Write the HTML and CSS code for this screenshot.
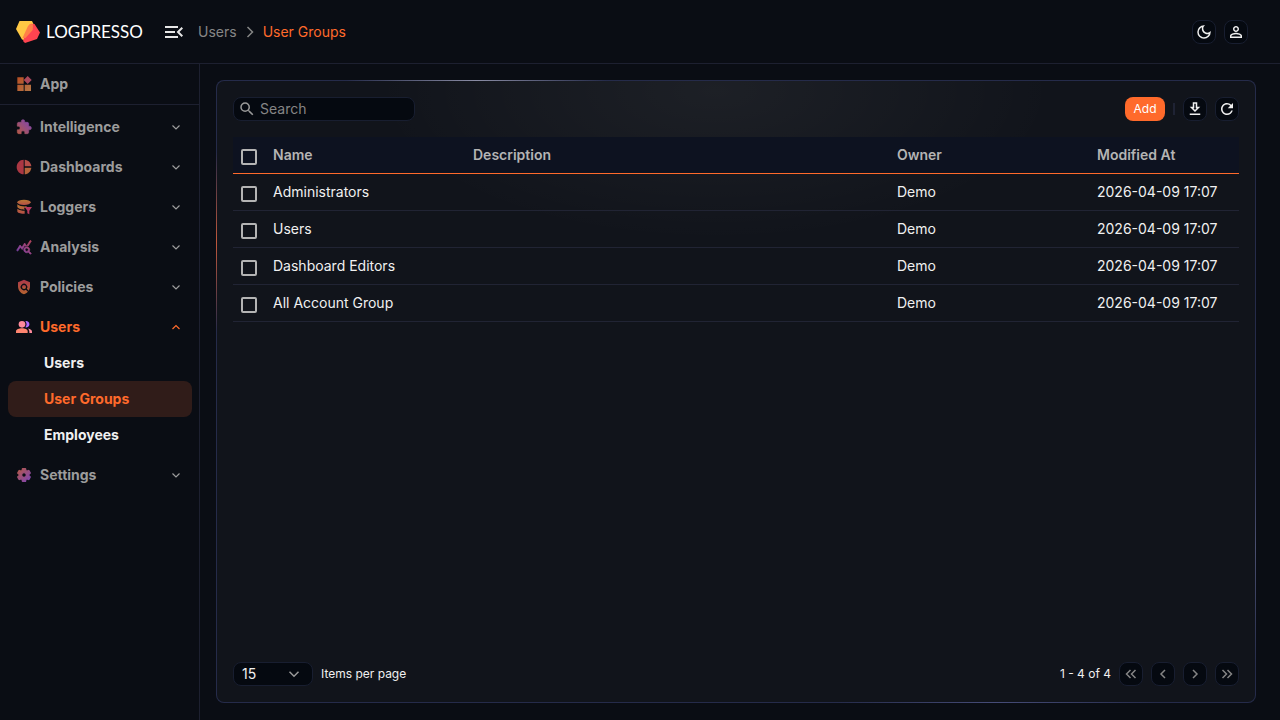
FILE: index.html
```
<!DOCTYPE html>
<html lang="en">
<head>
    <meta charset="UTF-8">
    <meta name="viewport" content="width=device-width, initial-scale=1.0">
    <title>User Groups - Logpresso</title>
    <link rel="stylesheet" href="styles.css">
</head>
<body>
    <!-- shared gradients and glyphs -->
    <svg class="defs" aria-hidden="true">
        <defs>
            <linearGradient id="g-orange" x1="0" y1="0" x2="1" y2="1">
                <stop offset="0" stop-color="#ff6a2b"/><stop offset="1" stop-color="#ffa45c"/>
            </linearGradient>
            <linearGradient id="g-purple" x1="0" y1="1" x2="1" y2="0">
                <stop offset="0" stop-color="#ff7a5c"/><stop offset="1" stop-color="#a95cff"/>
            </linearGradient>
            <linearGradient id="g-red" x1="0" y1="0" x2="0" y2="1">
                <stop offset="0" stop-color="#f04a62"/><stop offset="1" stop-color="#ff8a3d"/>
            </linearGradient>
            <linearGradient id="g-amber" x1="0" y1="0" x2="0" y2="1">
                <stop offset="0" stop-color="#ffa640"/><stop offset="1" stop-color="#ff6a5c"/>
            </linearGradient>
            <linearGradient id="g-stats" x1="1" y1="0" x2="0" y2="1">
                <stop offset="0" stop-color="#ff5c77"/><stop offset="1" stop-color="#a95cff"/>
            </linearGradient>
            <linearGradient id="g-gear" x1="0" y1="0" x2="1" y2="1">
                <stop offset="0" stop-color="#ff7a5c"/><stop offset="1" stop-color="#b05cff"/>
            </linearGradient>
        </defs>
        <symbol id="chevron-down" viewBox="0 0 16 16"><path d="M4.5 6.5L8 10l3.500-3.500" fill="none" stroke="currentColor" stroke-width="1.2"/></symbol>
        <symbol id="chevron-up" viewBox="0 0 16 16"><path d="M4.5 10L8 6.500l3.500 3.500" fill="none" stroke="currentColor" stroke-width="1.2"/></symbol>
    </svg>

    <header class="header">
        <a class="logo" href="#">
            <svg width="24" height="24" viewBox="0 0 24 24" aria-hidden="true">
                <path d="M3.500 1H16l1.500 3L8 20 6 19.500 0 9z" fill="#ffc844"/>
                <path d="M15 3.800l3.500.2 5.500 8.500-3 6.500L9 23l-2-2 1.500-4 5-12z" fill="#ff4450"/>
                <path d="M14 4l3 .2-.3 5.800L9.500 18 6.500 18 12 6z" fill="#ff8147"/>
            </svg>
            <span>LOGPRESSO</span>
        </a>
        <button class="menu-toggle" aria-label="Toggle menu">
            <svg width="24" height="24" viewBox="0 0 24 24"><path d="M3 18h13v-2H3v2zm0-5h10v-2H3v2zm0-7v2h13V6H3zm18 9.590L17.420 12 21 8.410 19.590 7l-5 5 5 5L21 15.590z"/></svg>
        </button>
        <nav class="breadcrumb" aria-label="Breadcrumb">
            <a href="#">Users</a>
            <svg width="12" height="12" viewBox="0 0 12 12" aria-hidden="true"><path d="M3.500 1l5 5-5 5" fill="none" stroke="currentColor" stroke-width="1.500"/></svg>
            <a class="current" href="#">User Groups</a>
        </nav>
        <div class="header-actions">
            <button class="icon-btn" aria-label="Dark mode">
                <svg viewBox="0 0 24 24"><path d="M9.370 5.510c-.18.64-.27 1.310-.27 1.990 0 4.080 3.320 7.400 7.400 7.400.68 0 1.350-.09 1.990-.27C17.450 17.190 14.930 19 12 19c-3.860 0-7-3.140-7-7 0-2.930 1.810-5.450 4.370-6.490zM12 3a9 9 0 1 0 9 9c0-.46-.04-.92-.1-1.360a5.389 5.389 0 0 1-4.400 2.260 5.403 5.403 0 0 1-3.140-9.800c-.44-.06-.9-.1-1.360-.1z"/></svg>
            </button>
            <button class="icon-btn" aria-label="Account">
                <svg viewBox="0 0 24 24"><path d="M12 5.900c1.160 0 2.100.94 2.100 2.100s-.94 2.100-2.100 2.100S9.900 9.160 9.900 8s.94-2.100 2.100-2.100m0 9c2.970 0 6.100 1.460 6.100 2.100v1.100H5.900V17c0-.64 3.130-2.100 6.100-2.100M12 4C9.790 4 8 5.790 8 8s1.790 4 4 4 4-1.790 4-4-1.790-4-4-4zm0 9c-2.670 0-8 1.340-8 4v3h16v-3c0-2.660-5.330-4-8-4z"/></svg>
            </button>
        </div>
    </header>

    <div class="layout">
        <nav class="sidebar" aria-label="Main">
            <a class="menu-item menu-app" href="#">
                <svg class="menu-icon" viewBox="0 0 24 24" fill="url(#g-orange)"><path d="M2 2h9.500v9.500H2zM2 13h9.500v9.500H2zM13 13h9.500v9.500H13z"/><path d="M17.500 0l6 6-6 6-6-6z" fill="#f0627a"/></svg>
                <span>App</span>
            </a>
            <div class="menu">
                <button class="menu-item">
                    <svg class="menu-icon" viewBox="0 0 24 24" fill="url(#g-purple)"><path stroke="url(#g-purple)" d="M20.500 11H19V7c0-1.100-.9-2-2-2h-4V3.500a2.500 2.500 0 0 0-5 0V5H4c-1.100 0-1.990.9-1.990 2v3.800H3.500c1.490 0 2.700 1.210 2.700 2.700s-1.210 2.700-2.700 2.700H2V20c0 1.100.9 2 2 2h3.800v-1.500c0-1.490 1.210-2.700 2.700-2.700 1.490 0 2.700 1.210 2.700 2.700V22H17c1.100 0 2-.9 2-2v-4h1.500a2.500 2.500 0 0 0 0-5z"/></svg>
                    <span>Intelligence</span>
                    <svg class="chevron"><use href="#chevron-down"/></svg>
                </button>
                <button class="menu-item">
                    <svg class="menu-icon" viewBox="0 0 24 24"><path d="M11.500 1v22C5.500 23 1 18 1 12S5.500 1 11.500 1z" fill="#f04a58"/><path d="M13 1c5.500.5 9.500 4.500 10 10H13z" fill="#ff6a60"/><path d="M13 13h10c-.5 5.500-4.800 9.500-10 10z" fill="#ff8a4c"/></svg>
                    <span>Dashboards</span>
                    <svg class="chevron"><use href="#chevron-down"/></svg>
                </button>
                <button class="menu-item">
                    <svg class="menu-icon" viewBox="0 0 24 24" fill="url(#g-amber)"><ellipse cx="12" cy="5" rx="10" ry="4"/><path d="M2 8c3 3 10 3.500 14 3v2H12l1 3C8 16 3 14.500 2 12zM2 14.500c3 2 7 3 11 3V22C8 22 3 21 2 19z"/><path d="M13 12h11l-4 5.500V23l-3-1.500v-4z" fill="#ff4d80"/></svg>
                    <span>Loggers</span>
                    <svg class="chevron"><use href="#chevron-down"/></svg>
                </button>
                <button class="menu-item">
                    <svg class="menu-icon" viewBox="0 0 24 24" fill="url(#g-stats)"><path d="M19.880 18.470c.44-.7.7-1.510.7-2.390 0-2.490-2.010-4.500-4.500-4.500s-4.500 2.010-4.500 4.500 2.010 4.500 4.490 4.500c.88 0 1.700-.26 2.390-.7L21.580 23 23 21.580l-3.120-3.110zm-3.800.11a2.500 2.500 0 0 1 0-5 2.500 2.500 0 0 1 0 5zm-.36-8.500c-.74.02-1.450.18-2.100.45l-.55-.83-3.800 6.180-3.010-3.520-3.630 5.810L1 17l5-8 3 3.500L13 6l2.720 4.080zm2.590.5c-.64-.28-1.330-.45-2.050-.49L21.380 2 23 3.180l-4.690 7.400z" stroke="url(#g-stats)"/></svg>
                    <span>Analysis</span>
                    <svg class="chevron"><use href="#chevron-down"/></svg>
                </button>
                <button class="menu-item">
                    <svg class="menu-icon" viewBox="0 0 24 24" fill="url(#g-red)"><path d="M21 5l-9-4-9 4v6c0 5.550 3.840 10.740 9 12 2.300-.56 4.330-1.900 5.880-3.710l-3.120-3.120a4.994 4.994 0 0 1-6.290-.64 5.003 5.003 0 0 1 0-7.070 5.003 5.003 0 0 1 7.070 0 5.006 5.006 0 0 1 .64 6.290l2.900 2.900C20.290 15.690 21 13.380 21 11V5z"/><circle cx="12" cy="12" r="3"/></svg>
                    <span>Policies</span>
                    <svg class="chevron"><use href="#chevron-down"/></svg>
                </button>
                <button class="menu-item open" aria-expanded="true">
                    <svg class="menu-icon" viewBox="0 0 24 24"><path d="M14 3.300a4.800 4.800 0 1 1 0 9.200c2.500-3 2.500-6.200 0-9.200z" fill="#b06aff"/><circle cx="9" cy="8" r="5" fill="#ff8a9c"/><path d="M0 21v-2.500C0 15.500 4.500 14 9 14s8.500 1.500 8.500 4.500V21z" fill="#ff8570"/><path d="M18 14.200c3.800.8 6 2.300 6 4.800v2h-4v-2c0-2-.8-3.500-2-4.800z" fill="#ff8a9c"/></svg>
                    <span>Users</span>
                    <svg class="chevron"><use href="#chevron-up"/></svg>
                </button>
                <div class="submenu">
                    <a href="#">Users</a>
                    <a class="active" href="#">User Groups</a>
                    <a href="#">Employees</a>
                </div>
                <button class="menu-item">
                    <svg class="menu-icon" viewBox="0 0 24 24" fill="url(#g-gear)"><path stroke="url(#g-gear)" stroke-width="2" d="M19.140 12.940c.04-.3.06-.61.06-.94 0-.32-.02-.64-.07-.94l2.030-1.580c.18-.14.23-.41.12-.61l-1.920-3.320c-.12-.22-.37-.29-.59-.22l-2.390.96c-.5-.38-1.030-.7-1.620-.94l-.36-2.540c-.04-.24-.24-.41-.48-.41h-3.840c-.24 0-.43.17-.47.41l-.36 2.540c-.59.24-1.130.57-1.620.94l-2.390-.96c-.22-.08-.47 0-.59.22L2.740 8.870c-.12.21-.08.47.12.61l2.030 1.580c-.05.3-.09.63-.09.94s.02.64.07.94l-2.030 1.580c-.18.14-.23.41-.12.61l1.920 3.320c.12.22.37.29.59.22l2.390-.96c.5.38 1.030.7 1.620.94l.36 2.540c.05.24.24.41.48.41h3.840c.24 0 .44-.17.47-.41l.36-2.540c.59-.24 1.130-.56 1.620-.94l2.390.96c.22.08.47 0 .59-.22l1.920-3.320c.12-.22.07-.47-.12-.61l-2.010-1.580zM12 15.600c-1.980 0-3.600-1.620-3.600-3.600s1.620-3.600 3.600-3.600 3.600 1.620 3.600 3.600-1.620 3.600-3.600 3.600z"/></svg>
                    <span>Settings</span>
                    <svg class="chevron"><use href="#chevron-down"/></svg>
                </button>
            </div>
        </nav>

        <main class="main">
            <section class="card">
                <div class="toolbar">
                    <label class="search">
                        <svg viewBox="0 0 24 24" aria-hidden="true"><path d="M15.500 14h-.79l-.28-.27A6.471 6.471 0 0 0 16 9.500 6.500 6.500 0 1 0 9.500 16c1.610 0 3.090-.59 4.230-1.570l.27.28v.79l5 4.990L20.490 19l-4.990-5zm-6 0C7.010 14 5 11.990 5 9.500S7.010 5 9.500 5 14 7.010 14 9.500 11.990 14 9.500 14z"/></svg>
                        <input type="text" placeholder="Search" aria-label="Search">
                    </label>
                    <div class="toolbar-actions">
                        <button class="btn-add">Add</button>
                        <span class="divider"></span>
                        <button class="icon-btn" aria-label="Download">
                            <svg viewBox="0 0 24 24"><path d="M19 9h-4V3H9v6H5l7 7 7-7zm-8 2V5h2v6h1.170L12 13.170 9.830 11H11zm-6 7h14v2H5z"/></svg>
                        </button>
                        <button class="icon-btn" aria-label="Refresh">
                            <svg viewBox="0 0 24 24"><path d="M17.650 6.350A7.958 7.958 0 0 0 12 4c-4.420 0-7.990 3.580-7.990 8s3.570 8 7.990 8c3.730 0 6.840-2.550 7.730-6h-2.080A5.990 5.990 0 0 1 12 18c-3.310 0-6-2.690-6-6s2.690-6 6-6c1.660 0 3.140.69 4.220 1.780L13 11h7V4l-2.350 2.350z"/></svg>
                        </button>
                    </div>
                </div>

                <table class="grid">
                    <colgroup>
                        <col class="col-check">
                        <col class="col-name">
                        <col>
                        <col class="col-owner">
                        <col class="col-date">
                    </colgroup>
                    <thead>
                        <tr>
                            <th><input type="checkbox" aria-label="Select all"></th>
                            <th>Name</th>
                            <th>Description</th>
                            <th>Owner</th>
                            <th>Modified At</th>
                        </tr>
                    </thead>
                    <tbody>
                        <tr>
                            <td><input type="checkbox" aria-label="Select Administrators"></td>
                            <td>Administrators</td>
                            <td></td>
                            <td>Demo</td>
                            <td>2026-04-09 17:07</td>
                        </tr>
                        <tr>
                            <td><input type="checkbox" aria-label="Select Users"></td>
                            <td>Users</td>
                            <td></td>
                            <td>Demo</td>
                            <td>2026-04-09 17:07</td>
                        </tr>
                        <tr>
                            <td><input type="checkbox" aria-label="Select Dashboard Editors"></td>
                            <td>Dashboard Editors</td>
                            <td></td>
                            <td>Demo</td>
                            <td>2026-04-09 17:07</td>
                        </tr>
                        <tr>
                            <td><input type="checkbox" aria-label="Select All Account Group"></td>
                            <td>All Account Group</td>
                            <td></td>
                            <td>Demo</td>
                            <td>2026-04-09 17:07</td>
                        </tr>
                    </tbody>
                </table>

                <div class="pager">
                    <div class="select">
                        <select id="page-size">
                            <option>15</option>
                            <option>50</option>
                            <option>100</option>
                        </select>
                        <svg viewBox="0 0 16 16" aria-hidden="true"><path d="M4 6l4 4 4-4" fill="none" stroke="currentColor" stroke-width="1.300"/></svg>
                    </div>
                    <label for="page-size">Items per page</label>
                    <span class="range">1 - 4 of 4</span>
                    <button class="icon-btn page-btn" aria-label="First page">
                        <svg viewBox="0 0 18 18"><path d="M8.500 5l-4 4 4 4M13.500 5l-4 4 4 4"/></svg>
                    </button>
                    <button class="icon-btn page-btn" aria-label="Previous page">
                        <svg viewBox="0 0 18 18"><path d="M11 5L7 9l4 4"/></svg>
                    </button>
                    <button class="icon-btn page-btn" aria-label="Next page">
                        <svg viewBox="0 0 18 18"><path d="M7 5l4 4-4 4"/></svg>
                    </button>
                    <button class="icon-btn page-btn" aria-label="Last page">
                        <svg viewBox="0 0 18 18"><path d="M4.500 5l4 4-4 4M9.500 5l4 4-4 4"/></svg>
                    </button>
                </div>
            </section>
        </main>
    </div>
</body>
</html>
```
FILE: styles.css
```
*{
    box-sizing: border-box;
}

body{
    margin: 0;
    min-height: 100vh;
    display: flex;
    flex-direction: column;
    background-color: #0a0d14;
    color: #f0f0f0;
    font-family: Inter, "Liberation Sans", sans-serif;
    font-size: 14px;
    line-height: 20px;
}

a{
    color: inherit;
    text-decoration: none;
}

button, input, select{
    font: inherit;
    color: inherit;
}

button{
    padding: 0;
    border: 0;
    background: none;
    cursor: pointer;
}

svg{
    display: block;
    flex: none;
}

.defs{
    position: absolute;
    width: 0;
    height: 0;
}

/* header */
.header{
    display: flex;
    align-items: center;
    height: 64px;
    padding: 0 32px 0 16px;
    border-bottom: 1px solid #1d2030;
}

.logo{
    display: flex;
    align-items: center;
    gap: 6px;
    width: 146px;
    color: #fff;
    font-family: Lato, sans-serif;
    font-size: 17px;
}

.menu-toggle svg{
    fill: #e6e6e6;
}

.breadcrumb{
    display: flex;
    align-items: center;
    gap: 7px;
    margin-left: 12px;
    color: #868686;
}

.breadcrumb .current{
    color: #ff6a2b;
}

.header-actions{
    display: flex;
    gap: 8px;
    margin-left: auto;
}

.icon-btn{
    display: flex;
    align-items: center;
    justify-content: center;
    width: 24px;
    height: 24px;
    border: 1px solid #181e30;
    border-radius: 8px;
    background-color: #050910;
}

.icon-btn svg{
    width: 18px;
    height: 18px;
    fill: #f0f0f0;
}

/* sidebar */
.layout{
    display: flex;
    flex: 1;
}

.sidebar{
    flex: none;
    width: 200px;
    border-right: 1px solid #1d2030;
}

.menu{
    display: flex;
    flex-direction: column;
    gap: 4px;
    padding: 4px 0;
}

.menu-item{
    display: flex;
    align-items: center;
    gap: 8px;
    width: 100%;
    height: 36px;
    padding: 0 15px 0 16px;
    color: #9c9c9c;
    font-weight: 700;
    text-align: left;
}

.menu-app{
    height: 41px;
    border-bottom: 1px solid #1d2030;
}

.menu-icon{
    width: 16px;
    height: 16px;
    opacity: 0.7;
}

.chevron{
    width: 16px;
    height: 16px;
    margin-left: auto;
}

.menu-item.open{
    color: #ff6a2b;
}

.menu-item.open .menu-icon{
    opacity: 1;
}

.submenu{
    margin-top: -4px;
    padding: 0 7px 0 8px;
}

.submenu a{
    display: block;
    padding: 8px 36px;
    border-radius: 8px;
    font-weight: 700;
}

.submenu .active{
    background-color: #301c19;
    color: #ff6a2b;
}

/* content */
.main{
    display: flex;
    flex: 1;
    min-width: 0;
    padding: 16px 24px 17px 16px;
}

/* first layers are the card surface, the rest shine through the 1px border */
.card{
    display: flex;
    flex-direction: column;
    flex: 1;
    min-width: 0;
    padding: 16px;
    border: 1px solid transparent;
    border-radius: 8px;
    background:
        radial-gradient(ellipse 340px 150px at 48% 10px, rgba(255, 255, 240, 0.05), transparent) padding-box,
        linear-gradient(#11141b, #11141b) padding-box,
        radial-gradient(circle 90px at 0 26%, #c0583c, transparent) border-box,
        radial-gradient(circle 130px at 25% 0, #8a8ca4, transparent) border-box,
        radial-gradient(circle 160px at 75% 100%, #464c78, transparent) border-box,
        radial-gradient(circle 120px at 100% 75%, #4a4f70, transparent) border-box,
        linear-gradient(#252b4a, #252b4a) border-box;
}

.toolbar{
    display: flex;
    justify-content: space-between;
    margin-bottom: 16px;
}

.search{
    display: flex;
    align-items: center;
    gap: 4px;
    width: 182px;
    height: 24px;
    padding: 0 4px;
    border: 1px solid #181e30;
    border-radius: 8px;
    background-color: #050910;
}

.search svg{
    width: 18px;
    height: 18px;
    fill: #999;
}

.search input{
    width: 100%;
    min-width: 0;
    padding: 0;
    border: 0;
    outline: none;
    background: none;
}

.search input::placeholder{
    color: #858585;
    opacity: 1;
}

.toolbar-actions{
    display: flex;
    align-items: center;
    gap: 8px;
}

.btn-add{
    width: 40px;
    height: 24px;
    border-radius: 8px;
    background-color: #ff6a2b;
    color: #fff;
    font-size: 12px;
}

.divider{
    width: 2px;
    height: 12px;
    background-color: #1f2334;
}

/* table */
.grid{
    width: 100%;
    table-layout: fixed;
    border-collapse: separate;
    border-spacing: 0;
}

.col-check{
    width: 32px;
}

.col-name, .col-owner{
    width: 200px;
}

.col-date{
    width: 150px;
}

.grid th, .grid td{
    height: 37px;
    padding: 0 8px;
    border-bottom: 1px solid #212434;
    text-align: left;
}

.grid th{
    border-bottom-color: #ff6a2b;
    background-color: #0d1220;
    color: #b4b4b4;
    font-weight: 600;
}

.grid input{
    display: block;
    appearance: none;
    width: 16px;
    height: 16px;
    margin: 3px 0 0;
    border: 2px solid #b4b4b4;
    border-radius: 2px;
}

/* pager */
.pager{
    display: flex;
    align-items: center;
    gap: 8px;
    margin-top: auto;
    font-size: 12px;
}

.select{
    position: relative;
}

.select select{
    display: block;
    appearance: none;
    width: 80px;
    height: 24px;
    padding: 0 8px;
    border: 1px solid #181e30;
    border-radius: 8px;
    background-color: #050910;
    font-size: 14px;
}

/* arrow over the select */
.select svg{
    position: absolute;
    top: 3px;
    right: 10px;
    width: 18px;
    height: 18px;
    color: #999;
    pointer-events: none;
}

.range{
    margin-left: auto;
}

.page-btn svg{
    fill: none;
    stroke: #858585;
    stroke-width: 1.5;
}
```
